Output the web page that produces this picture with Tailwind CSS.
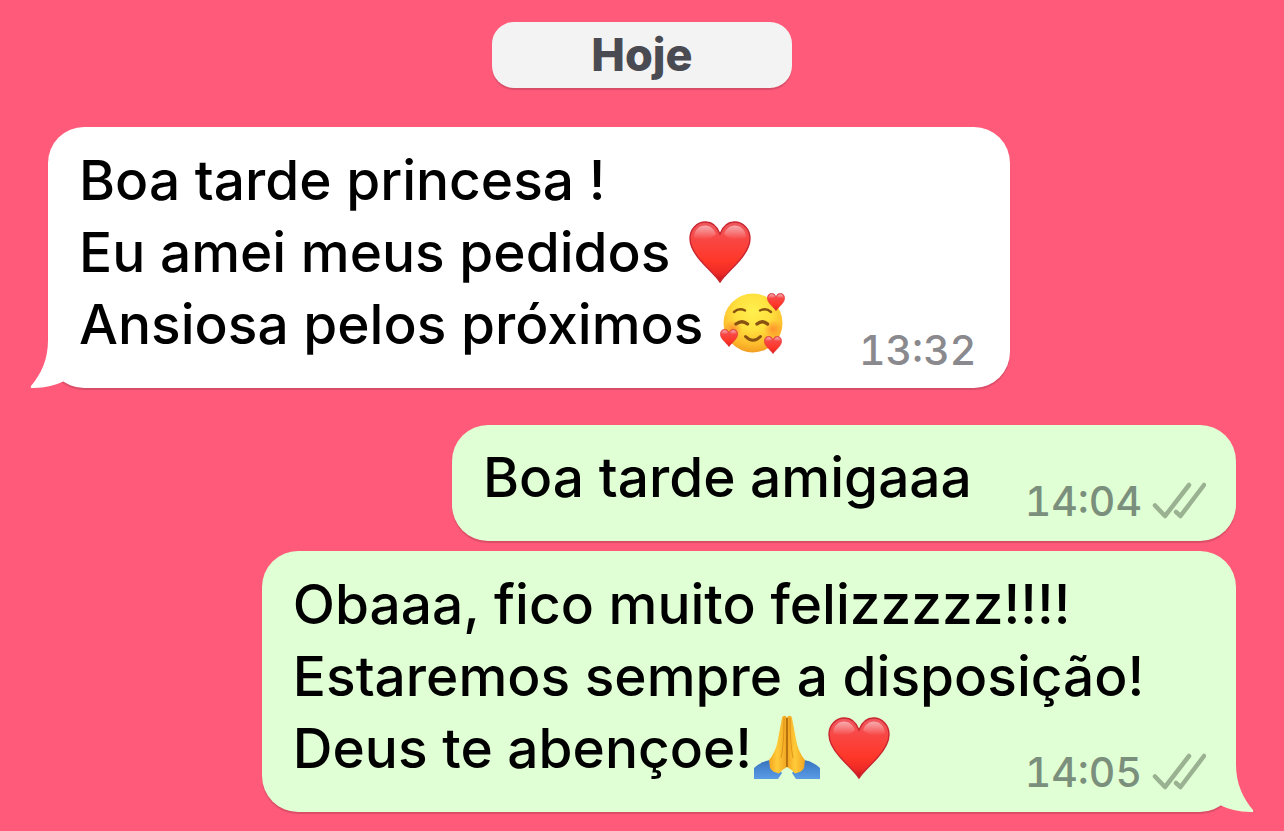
<!DOCTYPE html>
<html lang="pt-BR">
<head>
<meta charset="utf-8">
<meta name="viewport" content="width=device-width, initial-scale=1">
<title>Conversa</title>
<script src="https://cdn.jsdelivr.net/npm/@tailwindcss/browser@4"></script>
</head>
<body class="min-h-screen bg-[#ff5a79] font-['Inter','Liberation_Sans',sans-serif] font-medium text-black">

<!-- Shared shapes -->
<svg class="absolute size-0" aria-hidden="true">
  <defs>
    <linearGradient id="heartFill" x1="0" y1="0" x2="0" y2="1">
      <stop offset="0" stop-color="#ee5a60"/><stop offset=".3" stop-color="#f94643"/><stop offset=".65" stop-color="#ff3729"/><stop offset=".85" stop-color="#ee2a26"/><stop offset="1" stop-color="#c01420"/>
    </linearGradient>
    <linearGradient id="heartShine" x1="0" y1="0" x2="0" y2="1">
      <stop offset="0" stop-color="#fff" stop-opacity=".5"/><stop offset="1" stop-color="#fff" stop-opacity="0"/>
    </linearGradient>
    <radialGradient id="faceFill" cx=".5" cy=".3" r=".72">
      <stop offset="0" stop-color="#fff04e"/><stop offset=".45" stop-color="#ffdf3d"/><stop offset=".8" stop-color="#fdb92c"/><stop offset="1" stop-color="#f19a20"/>
    </radialGradient>
    <radialGradient id="blush"><stop offset="0" stop-color="#ff7a2a" stop-opacity=".7"/><stop offset="1" stop-color="#ff7a2a" stop-opacity="0"/></radialGradient>
    <linearGradient id="handFill" x1="0" y1="0" x2="1" y2="0">
      <stop offset="0" stop-color="#f3a51f"/><stop offset=".45" stop-color="#ffcb3a"/><stop offset="1" stop-color="#f0a420"/>
    </linearGradient>
    <linearGradient id="sleeveFill" x1="0" y1="0" x2="0" y2="1">
      <stop offset="0" stop-color="#3673bd"/><stop offset="1" stop-color="#5b9ce6"/>
    </linearGradient>
    <symbol id="heart" viewBox="0 0 62 62">
      <path d="M31 61C27 55 20 49 12 40C4 31 1 24 1 17.500C1 8 8 1 16.500 1C23 1 28 5 31 13C34 5 39 1 45.500 1C54 1 61 8 61 17.500C61 24 58 31 50 40C42 49 35 55 31 61Z" fill="url(#heartFill)" stroke="#c82631" stroke-width="1.400"/>
      <path d="M27 13C25 8 21 4.500 16.500 4.500C10 4.500 5.500 9 5 16C11 20 22 19 27 13ZM35 13C37 8 41 4.500 45.500 4.500C52 4.500 56.500 9 57 16C51 20 40 19 35 13Z" fill="url(#heartShine)"/>
    </symbol>
    <symbol id="face" viewBox="0 0 66 64">
      <circle cx="33" cy="32" r="29.500" fill="url(#faceFill)"/>
      <circle cx="13" cy="38" r="9" fill="url(#blush)"/><circle cx="53" cy="38" r="9" fill="url(#blush)"/>
      <g fill="none" stroke="#8a5210" stroke-width="2.400" stroke-linecap="round">
        <path d="M14 21Q19 16.500 25 19.500M40 19.500Q46 16.500 51 21"/>
        <path d="M16 33Q22 28.500 27.500 33M37 33Q42.500 28.500 47.500 33" stroke-width="3.400"/>
        <path d="M25.500 45.500Q33 53 40.500 45.500" stroke-width="3"/>
      </g>
      <use href="#heart" x="47" y="2" width="18" height="18"/>
      <use href="#heart" x="0" y="38" width="18" height="18"/>
      <use href="#heart" x="44" y="45" width="18" height="18"/>
    </symbol>
    <symbol id="pray" viewBox="0 0 66 66">
      <path d="M0 54Q8 47 16 46L28 59L24 65H0Z" fill="url(#sleeveFill)"/>
      <path d="M66 54Q58 47 50 46L38 59L42 65H66Z" fill="url(#sleeveFill)"/>
      <path d="M33 4C32 1 28.500 1 28 4L24 25C23 32 20 40 15 46L16 54Q18 58 25 59.500Q29 55 33 53Z" fill="url(#handFill)"/>
      <path d="M33 4C34 1 37.500 1 38 4L42 25C43 32 46 40 51 46L50 54Q48 58 41 59.500Q37 55 33 53Z" fill="url(#handFill)"/>
      <path d="M33 4V53" stroke="#a8640c" stroke-width="1.600"/>
      <path d="M30 4Q30 30 27 44M36 4Q36 30 39 44" fill="none" stroke="#d98c17" stroke-width=".8"/>
    </symbol>
    <symbol id="ticks" viewBox="0 0 54 38">
      <path d="M4 23.500L14 34L38 3M25 30L29.500 34L53 3" transform="translate(-1 0)" fill="none" stroke="#9ab292" stroke-width="4.500" stroke-linecap="round" stroke-linejoin="round"/>
    </symbol>
    <symbol id="tail" viewBox="0 0 54 50">
      <path d="M36 0C36 20 43 34 53 46Q54 48.500 51 48C38 48 28 45 21 41.500L0 30V0Z"/>
    </symbol>
  </defs>
</svg>

<main class="flex flex-col px-12 pt-[22px] pb-4">
  <h1 class="flex h-[66px] w-[300px] items-center justify-center self-center rounded-[22px] bg-[#f4f3f4] text-[45px] font-extrabold text-[#4a4b52] shadow-[0_2px_1px_#00000026]">Hoje</h1>

  <article class="relative mt-[39px] flex w-[81%] items-end justify-between self-start rounded-[36px] bg-white pt-[17px] pr-[34px] pb-7 pl-[31px] shadow-[0_2px_1px_#00000026]">
    <svg class="absolute -bottom-0.5 -left-[18px] h-[50px] w-[54px] -scale-x-100 fill-white" aria-hidden="true"><use href="#tail"/></svg>
    <p class="relative text-[55px] leading-[72px] whitespace-nowrap">Boa tarde princesa !<br>Eu amei meus pedidos <svg class="ml-1 inline size-[62px] align-[-11px]" role="img" aria-label="coração"><use href="#heart"/></svg><br>Ansiosa pelos próximos <svg class="ml-0.5 inline h-16 w-[66px] align-[-11px]" role="img" aria-label="rosto com corações"><use href="#face"/></svg></p>
    <time class="-mb-3 text-[41px] leading-[44px] text-[#8a8a8e] tabular-nums">13:32</time>
  </article>

  <article class="mt-[37px] flex w-[66%] items-end justify-between self-end rounded-[36px] bg-[#e1ffd4] pt-4 pr-[30px] pb-7 pl-[31px] shadow-[0_2px_1px_#00000026]">
    <p class="text-[55px] leading-[72px] whitespace-nowrap">Boa tarde amigaaa</p>
    <div class="-mb-2.5 flex items-center gap-2.5 text-[#7b8f7d]">
      <time class="text-[41px] leading-[44px] tabular-nums">14:04</time>
      <svg class="h-[38px] w-[54px]" role="img" aria-label="entregue"><use href="#ticks"/></svg>
    </div>
  </article>

  <article class="relative mt-[10px] flex w-[82%] items-end justify-between self-end rounded-[36px] bg-[#e1ffd4] pt-[17px] pr-[30px] pb-7 pl-[31px] shadow-[0_2px_1px_#00000026]">
    <svg class="absolute -right-[18px] -bottom-0.5 h-[50px] w-[54px] fill-[#e1ffd4]" aria-hidden="true"><use href="#tail"/></svg>
    <p class="relative w-0 text-[55px] leading-[72px] whitespace-nowrap">Obaaa, fico muito felizzzzz!!!!<br>Estaremos sempre a disposição!<br>Deus te abençoe!<svg class="ml-0.5 inline size-[66px] align-[-12px]" role="img" aria-label="mãos em oração"><use href="#pray"/></svg><svg class="ml-2 inline size-[62px] align-[-11px]" role="img" aria-label="coração"><use href="#heart"/></svg></p>
    <div class="relative -mb-2.5 flex items-center gap-2.5 text-[#7b8f7d]">
      <time class="text-[41px] leading-[44px] tabular-nums">14:05</time>
      <svg class="h-[38px] w-[54px]" role="img" aria-label="entregue"><use href="#ticks"/></svg>
    </div>
  </article>
</main>
</body>
</html>
